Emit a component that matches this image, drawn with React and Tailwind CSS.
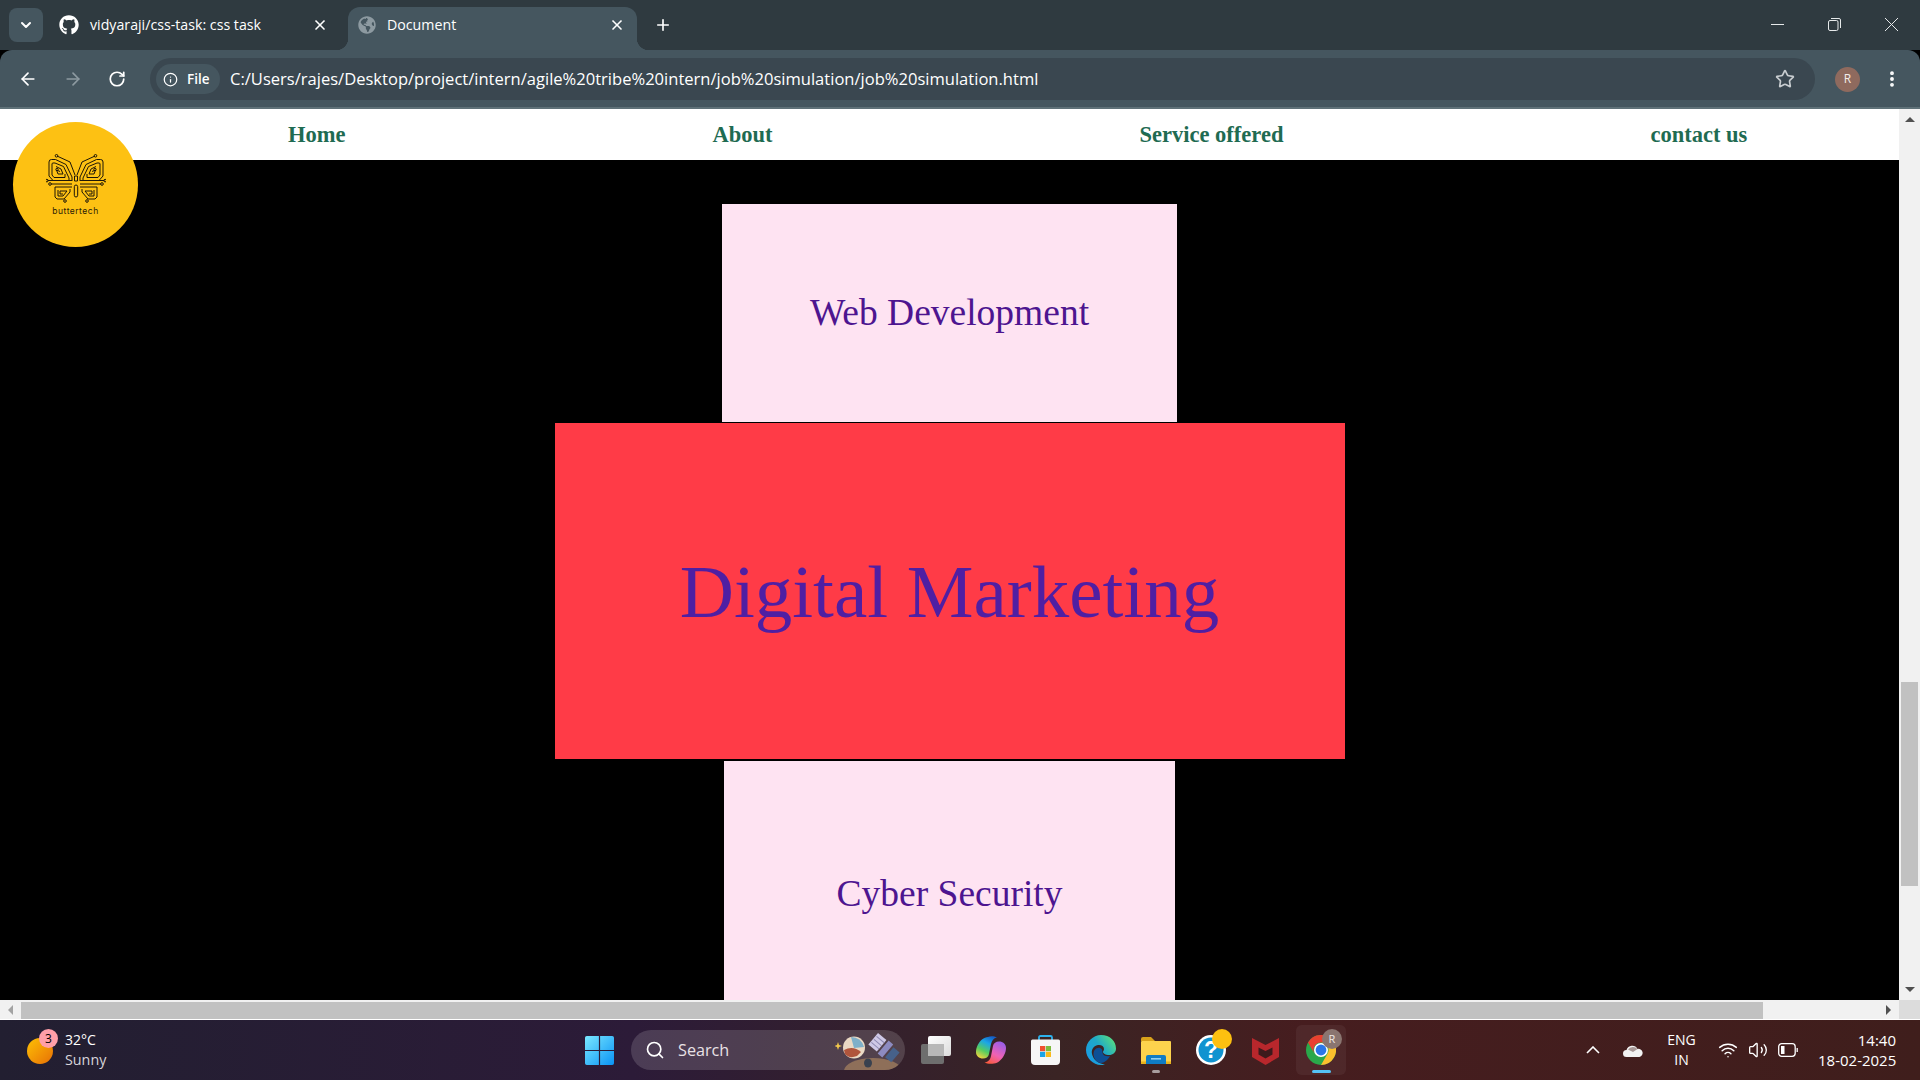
import React from 'react';
import { ArrowLeft, ArrowRight, RotateCw, Info, Star, X, Plus, ChevronDown, Search, Wifi, Volume2, EllipsisVertical } from 'lucide-react';
import { FaGithub, FaGlobeAmericas } from 'react-icons/fa';

const UI_FONT = "font-['Open_Sans','Noto_Sans',sans-serif]";

function ButterflyLogo() {
  // circuit butterfly, one wing mirrored
  const wing = (
    <g fill="none" stroke="#1d1608" strokeWidth="1" strokeLinejoin="round">
      <path d="M11 2 L24 8 L29 21" />
      <path d="M26 27 V23 L20 10.5 L9.5 5.5 H5.5 Q3 5.5 3 8 V22 L7 26.5 H1.5" />
      <path d="M23 27 V24 L17.5 12.5 L9 9 H7 Q6 9 6 10 V21 L8 23.5 H19 V20" />
      <path d="M10 12.5 L15 15 L17 20 H12 L10.5 16 L14 17.5" />
      <path d="M5 30 H26" />
      <path d="M7 26.5 H26" />
      <path d="M9 33 H26" />
      <path d="M9 33 V43 L11 45 H18 L24 38 V35" />
      <path d="M12 36 V42 H17 L21 37 H14 V40 H17" />
      <circle cx="10.5" cy="1.8" r="1.3" />
      <circle cx="0.9" cy="26.6" r="1.3" />
      <circle cx="4" cy="30" r="1.3" />
      <circle cx="19" cy="47" r="1.3" />
      <circle cx="11" cy="15.5" r="1.2" />
    </g>
  );
  return (
    <svg width="60" height="50" viewBox="0 0 60 50">
      {wing}
      <g transform="translate(60 0) scale(-1 1)">{wing}</g>
      <path d="M28.5 22 h3 v5 h-3 z" fill="none" stroke="#1d1608" strokeWidth="1" />
      <rect x="28.3" y="31" width="3.4" height="12" rx="1.7" fill="none" stroke="#1d1608" strokeWidth="1" />
    </svg>
  );
}

function ChromeTabs() {
  return (
    <div className={`h-[50px] bg-[#2f3a40] flex text-white text-[14.2px] whitespace-nowrap ${UI_FONT}`}>
      <div className="ml-[9px] mt-2 w-[34px] h-[34px] shrink-0 rounded-lg bg-[#45565f] flex items-center justify-center">
        <ChevronDown size={16} strokeWidth={3} />
      </div>
      <div className="w-[305px] shrink-0 flex items-center pl-[16px] pr-[20px] pb-[1px]">
        <FaGithub size={20} />
        <span className="ml-[11px] flex-1">vidyaraji/css-task: css task</span>
        <X size={16} strokeWidth={2.5} />
      </div>
      <div className="relative mt-[7px] w-[289px] h-[43px] shrink-0 rounded-t-xl bg-[#45565f] flex items-center pl-[10px] pr-[12px] pb-[7px]">
        <div className="absolute -left-3 bottom-0 w-3 h-3 bg-[radial-gradient(circle_at_0_0,transparent_12px,#45565f_12.5px)]" />
        <div className="absolute -right-3 bottom-0 w-3 h-3 bg-[radial-gradient(circle_at_100%_0,transparent_12px,#45565f_12.5px)]" />
        <FaGlobeAmericas size={18} className="text-[#8d9aa1]" />
        <span className="ml-[11px] flex-1">Document</span>
        <X size={16} strokeWidth={2.5} />
      </div>
      <div className="ml-[17px] flex items-center pb-[1px]">
        <Plus size={18} strokeWidth={2.2} />
      </div>
      <div className="flex-1" />
      <div className="flex items-center gap-[44px] pr-[22px] pb-[1px] text-[#e6e9ea]">
        <svg width="13" height="14" viewBox="0 0 13 14" stroke="currentColor">
          <path d="M0 6.5 H13" />
        </svg>
        <svg width="13" height="13" viewBox="0 0 13 13" fill="none" stroke="currentColor">
          <rect x="0.5" y="2.5" width="9.5" height="10" rx="1.5" />
          <path d="M3 0.5 h8 a1.5 1.5 0 0 1 1.5 1.5 v8" />
        </svg>
        <svg width="13" height="13" viewBox="0 0 13 13" stroke="currentColor">
          <path d="M0 0 L13 13 M13 0 L0 13" />
        </svg>
      </div>
    </div>
  );
}

function Toolbar() {
  return (
    <div className={`h-[59px] bg-[#45565f] rounded-tl-xl rounded-tr-xl border-b-2 border-[#5f7178] flex items-center pt-[1px] text-white whitespace-nowrap ${UI_FONT}`}>
      <div className="w-[150px] shrink-0 flex items-center pl-[18px] gap-[25px]">
        <ArrowLeft size={20} />
        <ArrowRight size={20} className="text-[#8d9aa1]" />
        <RotateCw size={18} strokeWidth={2.3} />
      </div>
      <div className="w-[1665px] h-[42px] shrink-0 rounded-full bg-[#3a4750] flex items-center pl-[6px] pr-[20px]">
        <div className="h-[30px] w-[64px] rounded-full bg-[#45565f] flex items-center pl-[7px] gap-[9px] text-[13.5px] font-semibold">
          <Info size={15} />
          <span>File</span>
        </div>
        <span className="ml-[10px] flex-1 text-[16.56px]">C:/Users/rajes/Desktop/project/intern/agile%20tribe%20intern/job%20simulation/job%20simulation.html</span>
        <Star size={20} strokeWidth={2} className="text-[#c8cdd0]" />
      </div>
      <div className="ml-[20px] w-[25px] h-[25px] shrink-0 rounded-full bg-[#8f6a5e] flex items-center justify-center text-[12px] text-[#f3ece9]">R</div>
      <EllipsisVertical size={20} strokeWidth={2.6} className="ml-[22px] shrink-0" />
    </div>
  );
}

function NavBar() {
  return (
    <nav className="h-[51px] bg-white flex items-center pl-[288px] gap-[367px] font-['Liberation_Serif',serif] font-bold text-[22.5px] text-[#1f6b52] whitespace-nowrap">
      <a>Home</a>
      <a>About</a>
      <a>Service offered</a>
      <a>contact us</a>
    </nav>
  );
}

function Page() {
  return (
    <div className="flex-1 min-h-0 bg-black overflow-hidden flex flex-col items-center pt-[44px] font-['Liberation_Serif',serif] text-[#4d1590]">
      <div className="w-[455px] h-[218px] shrink-0 bg-[#fee3f2] flex items-center justify-center text-[37.5px]">Web Development</div>
      <div className="mt-[1px] w-[790px] h-[336px] shrink-0 bg-[#ff3b47] flex items-center justify-center pt-[2px] text-[75px] text-[#4f1fa3]">Digital Marketing</div>
      <div className="mt-[2px] w-[451px] h-[336px] shrink-0 bg-[#fee3f2] flex items-center justify-center text-[37.5px] pb-[69px]">Cyber Security</div>
    </div>
  );
}

function TriUp() { return <div className="w-0 h-0 border-x-[5px] border-x-transparent border-b-[5px] border-b-[#505050]" />; }
function TriDown() { return <div className="w-0 h-0 border-x-[5px] border-x-transparent border-t-[5px] border-t-[#505050]" />; }
function TriLeft() { return <div className="w-0 h-0 border-y-[5px] border-y-transparent border-r-[5px] border-r-[#a3a3a3]" />; }
function TriRight() { return <div className="w-0 h-0 border-y-[5px] border-y-transparent border-l-[5px] border-l-[#505050]" />; }

function VerticalScrollbar() {
  return (
    <div className="w-[21px] shrink-0 bg-[#f1f1f1] flex flex-col items-center">
      <div className="h-[21px] flex items-center justify-center"><TriUp /></div>
      <div className="flex-1 w-full pt-[552px] pb-[93px] px-[2px]">
        <div className="h-full w-full bg-[#c1c1c1]" />
      </div>
      <div className="h-[21px] flex items-center justify-center"><TriDown /></div>
    </div>
  );
}

function HorizontalScrollbar() {
  return (
    <div className="h-[20px] shrink-0 flex">
      <div className="flex-1 flex bg-[#f1f1f1] border-b border-white">
        <div className="w-[21px] flex items-center justify-center"><TriLeft /></div>
        <div className="w-[1742px] mt-[2px] bg-[#c1c1c1]" />
        <div className="flex-1" />
        <div className="w-[21px] flex items-center justify-center"><TriRight /></div>
      </div>
      <div className="w-[21px] bg-[#dcdcdc] border-b border-white" />
    </div>
  );
}

function WindowsIcon() {
  return (
    <svg className="shrink-0" width="29" height="29" viewBox="0 0 24 24">
      <defs>
        <linearGradient id="win" x1="0" y1="0" x2="1" y2="1">
          <stop offset="0" stopColor="#7ae8ff" />
          <stop offset="1" stopColor="#0a93f5" />
        </linearGradient>
      </defs>
      <path d="M0 1.5 A1.5 1.5 0 0 1 1.5 0 H11.5 V11.5 H0 Z M12.5 0 H22.5 A1.5 1.5 0 0 1 24 1.5 V11.5 H12.5 Z M0 12.5 H11.5 V24 H1.5 A1.5 1.5 0 0 1 0 22.5 Z M12.5 12.5 H24 V22.5 A1.5 1.5 0 0 1 22.5 24 H12.5 Z" fill="url(#win)" />
    </svg>
  );
}

function SearchArt() {
  return (
    <svg className="shrink-0" width="70" height="40" viewBox="0 0 70 40">
      <ellipse cx="38" cy="41" rx="29" ry="13" fill="#a8835f" opacity="0.7" />
      <circle cx="19" cy="17.5" r="11" fill="#ead9c4" />
      <path d="M9 20 q9 -5 17 2 l-4 4 q-8 3 -12 -2 z" fill="#b0553c" />
      <path d="M16 7 q10 0 13 10 l-10 1 z" fill="#7fb0c9" />
      <path d="M3 12 l1 3 l3 1 l-3 1 l-1 3 l-1 -3 l-3 -1 l3 -1 z" fill="#f3c84c" />
      <g transform="rotate(40 50 18)">
        <rect x="35" y="11" width="11" height="15" fill="#cfc9e6" />
        <rect x="48" y="10" width="6" height="17" fill="#8d8bc0" />
        <rect x="56" y="12" width="8" height="13" fill="#46618a" />
        <path d="M36 14.5 h10 M36 18.5 h10 M36 22.5 h10" stroke="#8f8bb3" />
      </g>
      <ellipse cx="33" cy="33" rx="4" ry="4.5" fill="#39414f" />
    </svg>
  );
}

function TaskViewIcon() {
  return (
    <svg className="shrink-0" width="30" height="28" viewBox="0 0 30 28">
      <defs>
        <linearGradient id="tv" x1="0" y1="0" x2="1" y2="1">
          <stop offset="0" stopColor="#ffffff" />
          <stop offset="1" stopColor="#dcdcdc" />
        </linearGradient>
      </defs>
      <rect x="7" y="0" width="23" height="20" rx="2" fill="url(#tv)" />
      <rect x="0" y="8" width="23" height="20" rx="2" fill="#6e6e6e" />
      <rect x="7" y="8" width="16" height="12" fill="#b8b8b8" />
    </svg>
  );
}

function CopilotIcon() {
  return (
    <svg className="shrink-0" width="30" height="28" viewBox="0 0 30 28">
      <defs>
        <linearGradient id="cp1" x1="0.7" y1="0" x2="0.2" y2="1">
          <stop offset="0" stopColor="#1560c8" />
          <stop offset="0.3" stopColor="#1aa6e8" />
          <stop offset="0.65" stopColor="#55cc60" />
          <stop offset="1" stopColor="#f6d33d" />
        </linearGradient>
        <linearGradient id="cp2" x1="0.7" y1="0" x2="0.2" y2="1">
          <stop offset="0" stopColor="#9a5ee8" />
          <stop offset="0.55" stopColor="#ef62b4" />
          <stop offset="1" stopColor="#fa5a3c" />
        </linearGradient>
      </defs>
      <path d="M12 1 C14 0 18 0 21 1.5 C17.5 2 16 5 15 8 L13 18 C12.5 21 10 22.5 7 22.5 C3 22.5 0 20 0 16 C0 11 3 6 6 3.5 C8 2 10 1 12 1 Z" fill="url(#cp1)" />
      <path d="M18 27.5 C15 28 11 28 8.5 26.5 C12.5 26 14.5 23 15 20 L17 10 C17.5 7 20 5.5 23 5.5 C27 5.5 30 8 30 12 C30 17 27 22 23.5 25 C22 26.5 20 27.5 18 27.5 Z" fill="url(#cp2)" />
    </svg>
  );
}

function StoreIcon() {
  return (
    <svg className="shrink-0" width="29" height="30" viewBox="0 0 29 30">
      <path d="M8 6 V2.5 Q8 1 9.5 1 H19.5 Q21 1 21 2.5 V6" fill="none" stroke="#2db2ee" strokeWidth="1.8" />
      <path d="M0 6 Q0 4.5 1.5 4.5 H27.5 Q29 4.5 29 6 V26 Q29 30 25 30 H4 Q0 30 0 26 Z" fill="#f6f6f6" />
      <rect x="9" y="11" width="5.2" height="5.2" fill="#f05030" />
      <rect x="14.8" y="11" width="5.2" height="5.2" fill="#7cba3e" />
      <rect x="9" y="16.8" width="5.2" height="5.2" fill="#1ca4e8" />
      <rect x="14.8" y="16.8" width="5.2" height="5.2" fill="#fbba1a" />
    </svg>
  );
}

function EdgeIcon() {
  return (
    <svg className="shrink-0" width="30" height="30" viewBox="0 0 30 30">
      <defs>
        <linearGradient id="edge1" x1="0.1" y1="0.8" x2="0.9" y2="0.2">
          <stop offset="0" stopColor="#1a9ce2" />
          <stop offset="0.55" stopColor="#1fa9c8" />
          <stop offset="1" stopColor="#4fd68a" />
        </linearGradient>
      </defs>
      <path d="M15 0 C24 0 30 6 30 13.5 C30 17.5 27 20 23 20 C19.5 20 17 18.5 17 17 C17 16 18 15.5 18 14 C18 11 15 9.5 12 10 C7 11 5 15 6 19 C7 24 12 29 19 29.5 C17.5 30 16 30 15 30 C7 30 0 23 0 15 C0 7 7 0 15 0 Z" fill="url(#edge1)" />
      <path d="M8 22 C6 15 11 12 14 13 C17 14 16 17 17 19 C18 21 21 21.5 24 21 C22 25 18 28 15 28 C12 28 9 25 8 22 Z" fill="#0d4f96" />
    </svg>
  );
}

function ExplorerIcon() {
  return (
    <svg className="shrink-0" width="30" height="27" viewBox="0 0 30 27">
      <path d="M0 2 q0 -2 2 -2 h8 l4 4 h-14 z" fill="#d9a21b" />
      <rect x="0" y="4" width="30" height="23" rx="1" fill="#fdd34d" />
      <rect x="0" y="24.5" width="30" height="2.5" fill="#e8b21c" />
      <path d="M5 27 v-7 q0 -2 2 -2 h16 q2 0 2 2 v7 z" fill="#0f7cc4" />
      <rect x="10" y="21" width="10" height="1.6" fill="#8fd0f2" />
    </svg>
  );
}

function HelpIcon() {
  return (
    <svg className="shrink-0" width="36" height="48" viewBox="0 0 36 48">
      <circle cx="15" cy="21" r="15" fill="#fff" />
      <circle cx="15" cy="21" r="12.5" fill="#1093d0" />
      <text x="15" y="29" textAnchor="middle" fontFamily="Liberation Sans, sans-serif" fontWeight="700" fontSize="23" fill="#fff">?</text>
      <circle cx="26" cy="10" r="10" fill="#fdc010" />
    </svg>
  );
}

function McafeeIcon() {
  return (
    <svg className="shrink-0" width="27" height="30" viewBox="0 0 27 30">
      <path d="M0 3 L13.5 10 L27 3 V22 L13.5 30 L0 22 Z" fill="#b8272c" />
      <path d="M6.5 12.5 L13.5 16 L20.5 12.5 V19.5 L13.5 23.5 L6.5 19.5 Z" fill="#3d1a1c" />
    </svg>
  );
}

function ChromeIcon() {
  return (
    <svg width="30" height="30" viewBox="0 0 30 30">
      <circle cx="15" cy="15" r="15" fill="#2aa84a" />
      <path d="M2 7.5 A15 15 0 0 1 28 7.5 H15 A7.5 7.5 0 0 0 8.5 18.75 Z" fill="#e8402f" />
      <path d="M28 7.5 H15 A7.5 7.5 0 0 1 21.5 18.75 L15 30 A15 15 0 0 0 28 7.5 Z" fill="#fbc02d" />
      <circle cx="15" cy="15" r="7" fill="#fff" />
      <circle cx="15" cy="15" r="5.4" fill="#2a76e8" />
    </svg>
  );
}

function Taskbar() {
  return (
    <div className={`h-[60px] shrink-0 flex items-center text-white whitespace-nowrap bg-[linear-gradient(90deg,#221f31_0%,#2c1b38_33%,#3a2424_55%,#461d1f_68%,#3f1e1c_100%)] ${UI_FONT}`}>
      {/* weather */}
      <div className="w-[585px] shrink-0 pl-[27px] flex items-center">
        <div className="relative w-[26px] h-[26px] mt-[2px] rounded-full bg-gradient-to-br from-[#fdc104] to-[#e66f05]">
          <div className="absolute -top-[9px] left-[12px] w-[19px] h-[19px] rounded-full bg-[#ff9fa8] text-black text-[12px] leading-[19px] text-center">3</div>
        </div>
        <div className="ml-[12px] leading-[20px]">
          <div className="text-[14px]">32°C</div>
          <div className="text-[14.3px] text-[#d8d5da]">Sunny</div>
        </div>
      </div>
      <WindowsIcon />
      {/* search box */}
      <div className="ml-[17px] w-[274px] h-[40px] shrink-0 rounded-full bg-white/15 flex items-center pl-[14px] overflow-hidden">
        <Search size={20} strokeWidth={2} />
        <span className="ml-[13px] flex-1 text-[16.2px] text-[#e9e2e6]">Search</span>
        <SearchArt />
      </div>
      <div className="ml-[16px]"><TaskViewIcon /></div>
      <div className="ml-[25px]"><CopilotIcon /></div>
      <div className="ml-[25px]"><StoreIcon /></div>
      <div className="ml-[26px]"><EdgeIcon /></div>
      <div className="relative ml-[25px]">
        <ExplorerIcon />
        <div className="absolute left-[11px] -bottom-[9px] w-[8px] h-[3px] rounded-full bg-[#a89d9e]" />
      </div>
      <div className="ml-[25px] mt-[6px]"><HelpIcon /></div>
      <div className="ml-[20px]"><McafeeIcon /></div>
      {/* active chrome */}
      <div className="relative ml-[17px] w-[50px] h-[50px] shrink-0 rounded-md bg-white/5 flex items-center justify-center">
        <ChromeIcon />
        <div className="absolute top-[4px] left-[26px] w-[20px] h-[20px] rounded-full bg-[#8a7570] text-[#efe8e6] text-[11px] leading-[20px] text-center">R</div>
        <div className="absolute bottom-[2px] left-[16px] w-[19px] h-[3px] rounded-full bg-[#55c2f5]" />
      </div>
      <div className="flex-1" />
      {/* tray */}
      <div className="flex items-center pr-[24px]">
        <svg width="14" height="8" viewBox="0 0 14 8" fill="none" stroke="#fff" strokeWidth="1.6">
          <path d="M1 7 L7 1 L13 7" />
        </svg>
        <svg className="ml-[23px]" width="20" height="13" viewBox="0 0 20 13">
          <path d="M3.5 13 a3.5 3.5 0 0 1 0 -7 a6 6 0 0 1 11 -1 a4 4 0 0 1 2 8 z" fill="#f2f2f2" />
          <path d="M5 5.6 a6 6 0 0 1 9.5 -0.6 l-4.5 3 z" fill="#a79897" />
        </svg>
        <div className="ml-[24px] w-[29px] text-center text-[14px] leading-[20px]">
          <div>ENG</div>
          <div>IN</div>
        </div>
        <Wifi size={20} strokeWidth={1.8} className="ml-[22px]" />
        <Volume2 size={20} strokeWidth={1.6} className="ml-[10px]" />
        <svg className="ml-[10px]" width="20" height="14" viewBox="0 0 20 14" fill="none" stroke="#fff" strokeWidth="1.3">
          <rect x="0.7" y="0.7" width="16.5" height="12.6" rx="3" />
          <path d="M19.2 5 v4" />
          <rect x="3" y="3" width="3.5" height="8" fill="#fff" stroke="none" />
        </svg>
        <div className="ml-[20px] w-[78px] text-right text-[15px] leading-[20px]">
          <div>14:40</div>
          <div>18-02-2025</div>
        </div>
      </div>
    </div>
  );
}

export default function App() {
  return (
    <div className="relative h-screen w-full overflow-hidden flex flex-col bg-black">
      <ChromeTabs />
      <Toolbar />
      <div className="flex-1 min-h-0 flex">
        <div className="relative flex-1 min-w-0 flex flex-col">
          <NavBar />
          <Page />
          {/* logo sits over the nav and the black page */}
          <div className="absolute left-[13px] top-[13px] w-[125px] h-[125px] rounded-full bg-[#fdc113] flex flex-col items-center pt-[32px]">
            <ButterflyLogo />
            <span className="mt-[2px] font-['Inter',sans-serif] text-[8.5px] tracking-[0.5px] leading-[10px] text-[#2a2008]">buttertech</span>
          </div>
        </div>
        <VerticalScrollbar />
      </div>
      <HorizontalScrollbar />
      <Taskbar />
    </div>
  );
}
